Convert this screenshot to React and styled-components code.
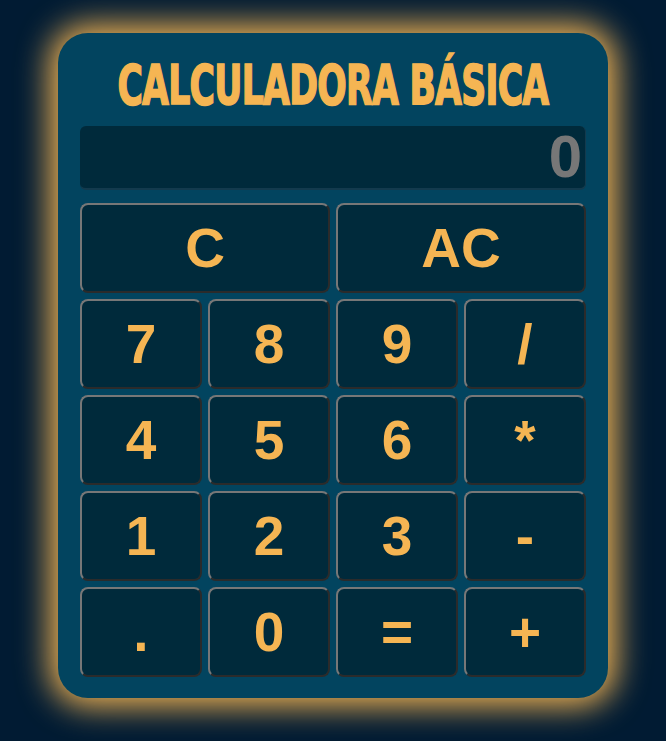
import { createGlobalStyle } from 'styled-components';
import styled from 'styled-components';

const GlobalStyle = createGlobalStyle`
    html, body {
        margin: 0;
        padding: 0;
        background: #011b33;
    }
    body {
        font-family: "Liberation Sans", Arial, sans-serif;
    }
`;

const Page = styled.div`
    min-height: 741px;
    display: flex;
    justify-content: center;
    align-items: flex-start;
    padding-top: 33px;
    box-sizing: border-box;
`;

const Card = styled.div`
    width: 550px;
    height: 665px;
    box-sizing: border-box;
    background: #02445f;
    border-radius: 30px;
    box-shadow: 0 0 32px 8px #f5b553;
    padding: 21px 22px;
    display: flex;
    flex-direction: column;
`;

const Title = styled.h1`
    margin: 0;
    height: 72px;
    padding-bottom: 10px;
    box-sizing: border-box;
    display: flex;
    justify-content: center;
    align-items: center;
    color: #f5b553;
    font-family: "DejaVu Sans Condensed", "DejaVu Sans", sans-serif;
    font-weight: bold;
    font-size: 55px;
    letter-spacing: -1px;
    white-space: nowrap;

    span {
        display: inline-block;
        transform: scaleX(0.7);
        -webkit-text-stroke: 1.6px #f5b553;
    }
`;

const Display = styled.div`
    height: 64px;
    box-sizing: border-box;
    background: #002a3b;
    border-radius: 6px;
    border-bottom: 2px solid #133a4d;
    border-right: 1px solid #133a4d;
    display: flex;
    align-items: center;
    justify-content: flex-end;
    padding-right: 3px;
    color: #777;
    font-weight: bold;
    font-size: 60px;
    line-height: 1;
`;

const Keys = styled.div`
    margin-top: 13px;
    display: grid;
    grid-template-columns: repeat(4, 1fr);
    grid-auto-rows: 90px;
    gap: 6px;
`;

const Key = styled.button`
    grid-column: span ${({ $span }) => $span || 1};
    background: #002a3b;
    border: 2px solid;
    border-color: #777 #2b2b2b #2b2b2b #777;
    border-radius: 8px;
    color: #f5b553;
    font-family: "Liberation Sans", Arial, sans-serif;
    font-weight: bold;
    font-size: 55px;
    padding: 0;
    display: flex;
    align-items: center;
    justify-content: center;
    cursor: pointer;
`;

const rows = [
    ['7', '8', '9', '/'],
    ['4', '5', '6', '*'],
    ['1', '2', '3', '-'],
    ['.', '0', '=', '+'],
];

export default function App() {
    return (
        <>
            <GlobalStyle />
            <Page>
                <Card>
                    <Title><span>CALCULADORA BÁSICA</span></Title>
                    <Display>0</Display>
                    <Keys>
                        <Key $span={2}>C</Key>
                        <Key $span={2}>AC</Key>
                        {rows.flat().map((k) => (
                            <Key key={k}>{k}</Key>
                        ))}
                    </Keys>
                </Card>
            </Page>
        </>
    );
}
